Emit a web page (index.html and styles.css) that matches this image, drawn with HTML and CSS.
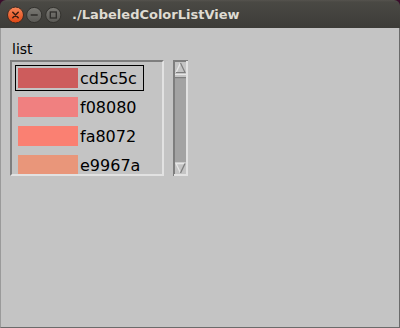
FILE: index.html
```html
<!DOCTYPE html>
<html>
<head>
<meta charset="utf-8">
<link rel="stylesheet" href="styles.css">
</head>
<body>
<div class="window">
  <div class="titlebar">
    <svg class="controls" width="66" height="28" viewBox="0 0 66 28">
      <defs>
        <linearGradient id="gclose" x1="0" y1="0" x2="0" y2="1">
          <stop offset="0" stop-color="#f7875a"/>
          <stop offset="1" stop-color="#df4613"/>
        </linearGradient>
        <linearGradient id="ggray" x1="0" y1="0" x2="0" y2="1">
          <stop offset="0" stop-color="#7a7974"/>
          <stop offset="1" stop-color="#5a5955"/>
        </linearGradient>
      </defs>
      <circle cx="15.5" cy="15" r="8" fill="url(#gclose)" stroke="#3a2a22" stroke-width="1"/>
      <path d="M12.8 12.3 L18.2 17.7 M18.2 12.3 L12.8 17.7" stroke="#3b1e12" stroke-width="1.6" stroke-linecap="round"/>
      <circle cx="34.2" cy="15" r="7.6" fill="url(#ggray)" stroke="#33322e" stroke-width="1"/>
      <path d="M30.7 15 L37.7 15" stroke="#2e2d2a" stroke-width="1.6"/>
      <circle cx="53.3" cy="15" r="7.6" fill="url(#ggray)" stroke="#33322e" stroke-width="1"/>
      <rect x="50.3" y="12" width="6" height="6" fill="none" stroke="#2e2d2a" stroke-width="1.3"/>
    </svg>
    <span class="title">./LabeledColorListView</span>
  </div>
  <div class="content">
    <div class="label">list</div>
    <div class="listrow">
      <div class="listbox">
        <div class="item selected"><span class="swatch" style="background:#cd5c5c"></span><span class="name">cd5c5c</span></div>
        <div class="item"><span class="swatch" style="background:#f08080"></span><span class="name">f08080</span></div>
        <div class="item"><span class="swatch" style="background:#fa8072"></span><span class="name">fa8072</span></div>
        <div class="item"><span class="swatch" style="background:#e9967a"></span><span class="name">e9967a</span></div>
      </div>
      <svg class="scrollbar" width="15" height="116" viewBox="0 0 15 116">
        <rect x="0" y="0" width="15" height="116" fill="#a3a3a3"/>
        <rect x="0" y="0" width="15" height="2" fill="#7e7e7e"/>
        <rect x="0" y="0" width="2" height="116" fill="#7e7e7e"/>
        <rect x="13" y="1" width="2" height="115" fill="#e2e2e2"/>
        <rect x="1" y="114" width="14" height="2" fill="#e2e2e2"/>
        <rect x="2" y="2" width="11" height="12" fill="#c4c4c4"/>
        <polygon points="7.5,3 12,12.5 3,12.5" fill="#c4c4c4"/>
        <path d="M3 12.5 L7.5 3" stroke="#e6e6e6" stroke-width="1.4" fill="none"/>
        <path d="M7.5 3 L12 12.5 L3 12.5" stroke="#7e7e7e" stroke-width="1.2" fill="none"/>
        <rect x="2" y="14" width="11" height="4" fill="#c4c4c4"/>
        <rect x="2" y="14" width="11" height="1" fill="#e6e6e6"/>
        <rect x="2" y="17" width="11" height="1.2" fill="#7e7e7e"/>
        <rect x="2" y="102" width="11" height="12" fill="#c4c4c4"/>
        <polygon points="3,103.5 12,103.5 7.5,113" fill="#c4c4c4"/>
        <path d="M7.5 113 L3 103.5 L12 103.5" stroke="#e6e6e6" stroke-width="1.3" fill="none"/>
        <path d="M12 103.5 L7.5 113" stroke="#7e7e7e" stroke-width="1.3" fill="none"/>
      </svg>
    </div>
  </div>
</div>
</body>
</html>
```

FILE: styles.css
```css
html, body {
  margin: 0;
  padding: 0;
}
body {
  background: #3a0d2b;
  width: 400px;
  height: 328px;
  overflow: hidden;
}
.window {
  width: 400px;
  height: 328px;
  border-radius: 6px 6px 0 0;
  overflow: hidden;
  display: flex;
  flex-direction: column;
}
.titlebar {
  height: 28px;
  flex: none;
  display: flex;
  align-items: flex-start;
  background: linear-gradient(#55534e 0, #4a4944 2px, #3d3c38 100%);
}
.controls {
  flex: none;
}
.title {
  margin-left: 6px;
  padding-top: 5px;
  font-family: "DejaVu Sans", sans-serif;
  font-weight: bold;
  font-size: 13px;
  line-height: 20px;
  color: #dfdbd2;
}
.content {
  flex: 1;
  background: #c4c4c4;
  border-left: 1px solid #9a9a9a;
  border-right: 1px solid #6b6b6b;
  border-bottom: 1px solid #6b6b6b;
  padding: 13px 0 0 9px;
}
.label {
  font-family: "DejaVu Sans", sans-serif;
  font-size: 14px;
  line-height: 16px;
  color: #000;
  padding-left: 2px;
  height: 16px;
  margin-bottom: 3px;
}
.listrow {
  display: flex;
  align-items: flex-start;
  gap: 9px;
}
.listbox {
  width: 147px;
  height: 109px;
  border: 2px solid;
  border-color: #7e7e7e #e2e2e2 #e2e2e2 #7e7e7e;
  overflow: hidden;
  padding: 3px 0 0 3px;
  box-sizing: content-box;
}
.item {
  display: flex;
  align-items: center;
  width: 129px;
  height: 26px;
  box-sizing: border-box;
  border: 1px solid transparent;
  padding: 2px;
  margin-bottom: 3px;
}
.item.selected {
  border-color: #000;
}
.swatch {
  flex: none;
  width: 60px;
  height: 20px;
}
.name {
  margin-left: 2px;
  padding-top: 1px;
  font-family: "DejaVu Sans", sans-serif;
  font-size: 16px;
  line-height: 20px;
  color: #000;
  white-space: nowrap;
}
.scrollbar {
  flex: none;
  display: block;
}
```
